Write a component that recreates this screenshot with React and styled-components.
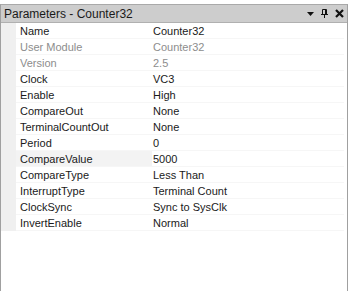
import React from "react";
import styled, { createGlobalStyle } from "styled-components";

const Global = createGlobalStyle`
  html, body { margin: 0; padding: 0; background: #ffffff; }
  body { font-family: "Liberation Sans", Arial, sans-serif; }
`;

const Window = styled.div`
  width: 350px;
  height: 291px;
  box-sizing: border-box;
  padding-top: 4px;
  padding-right: 2px;
  background: #ffffff;
  display: flex;
  flex-direction: column;
`;

const Panel = styled.div`
  flex: 1;
  display: flex;
  flex-direction: column;
  border-left: 1px solid #a0a0a0;
  border-right: 1px solid #a0a0a0;
  border-top: 1px solid #a9a9a9;
`;

const Header = styled.div`
  height: 17px;
  background: #cdcdcd;
  border-bottom: 1px solid #b0b0b0;
  display: flex;
  align-items: center;
  padding: 0 3px 0 3px;
  font-size: 12px;
  color: #1a1a1a;
`;

const Title = styled.span`
  flex: 1;
`;

const Tools = styled.div`
  display: flex;
  align-items: center;
  gap: 7px;
`;

const Grid = styled.div`
  flex: 1;
  display: flex;
  flex-direction: column;
  background: #ffffff;
  padding-right: 3px;
`;

const Row = styled.div`
  display: grid;
  grid-template-columns: 15px 136px 1fr;
  height: 16px;
  font-size: 11px;
  line-height: 16px;
`;

const Gutter = styled.div`
  background: #f0f0f0;
`;

const Cell = styled.div`
  padding-left: ${(p) => (p.$value ? "1px" : "4px")};
  color: ${(p) => (p.$dim ? "#8d8d8d" : "#1a1a1a")};
  background: ${(p) => (p.$sel ? "#f3f3f3" : "transparent")};
  border-bottom: 1px solid #f6f6f6;
  box-sizing: border-box;
  white-space: nowrap;
  overflow: hidden;
`;

const Filler = styled.div`
  flex: 1;
`;

const rows = [
  ["Name", "Counter32"],
  ["User Module", "Counter32", true],
  ["Version", "2.5", true],
  ["Clock", "VC3"],
  ["Enable", "High"],
  ["CompareOut", "None"],
  ["TerminalCountOut", "None"],
  ["Period", "0"],
  ["CompareValue", "5000", false, true],
  ["CompareType", "Less Than"],
  ["InterruptType", "Terminal Count"],
  ["ClockSync", "Sync to SysClk"],
  ["InvertEnable", "Normal"],
];

export default function App() {
  return (
    <Window>
      <Global />
      <Panel>
        <Header>
          <Title>Parameters - Counter32</Title>
          <Tools>
            <svg width="7" height="4" viewBox="0 0 7 4">
              <path d="M0 0H7L3.5 4Z" fill="#111" />
            </svg>
            <svg width="7" height="9" viewBox="0 0 7 9">
              <path d="M1.5 0.5H5.5V5.5M1.5 0.5V5.5M0 5.5H7M3.5 5.5V9M4.5 0.5V5.5" stroke="#111" strokeWidth="1" fill="none" />
            </svg>
            <svg width="9" height="9" viewBox="0 0 9 9">
              <path d="M1 1L8 8M8 1L1 8" stroke="#111" strokeWidth="2.2" />
            </svg>
          </Tools>
        </Header>
        <Grid>
          {rows.map(([k, v, dim, sel]) => (
            <Row key={k}>
              <Gutter />
              <Cell $dim={dim} $sel={sel}>{k}</Cell>
              <Cell $value $dim={dim}>{v}</Cell>
            </Row>
          ))}
          <Filler />
        </Grid>
      </Panel>
    </Window>
  );
}
